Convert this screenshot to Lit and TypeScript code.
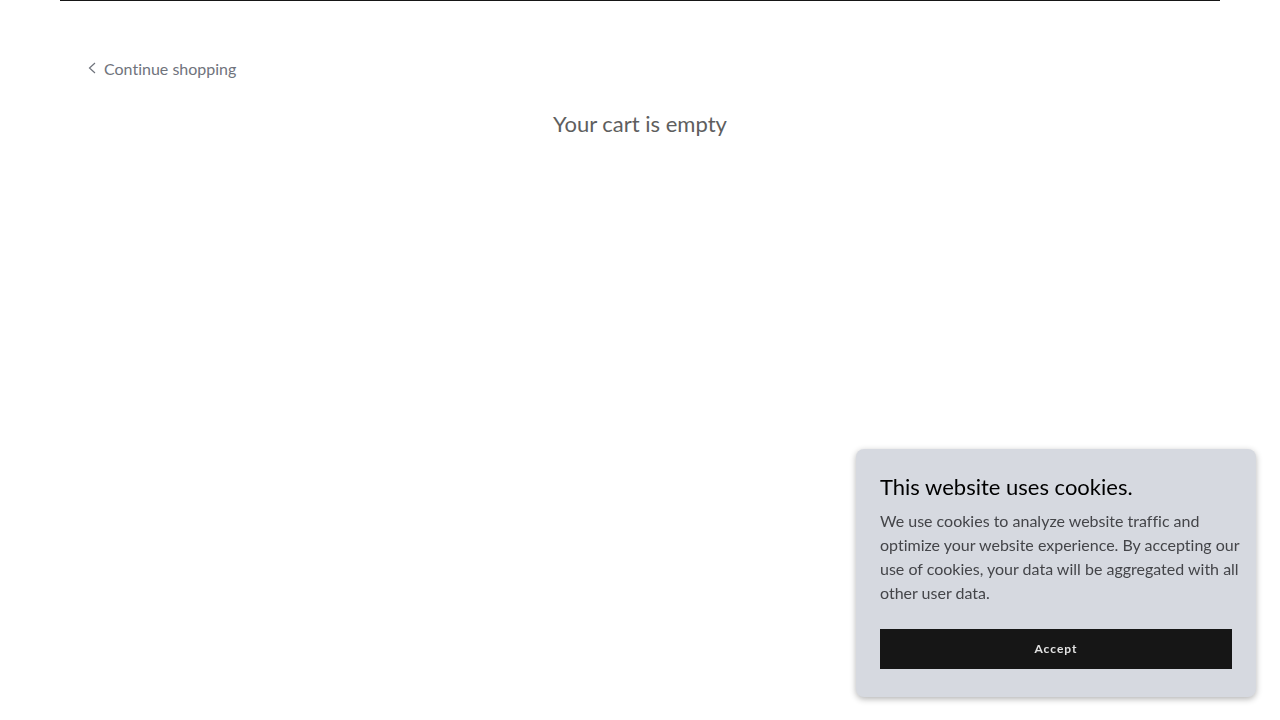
import { LitElement, html, css } from 'lit'
import { customElement, state } from 'lit/decorators.js'

@customElement('cookie-banner')
class CookieBanner extends LitElement {
  static styles = css`
    /* floats over the page, bottom right */
    :host {
      position: fixed;
      right: 24px;
      bottom: 23px;
      box-sizing: border-box;
      width: 400px;
      max-width: calc(100% - 48px);
      padding: 24px 24px 28px;
      border-radius: 8px;
      background-color: #d6d9e0;
      box-shadow: 0 2px 6px rgba(0, 0, 0, 0.3);
    }

    :host([hidden]) {
      display: none;
    }

    h2 {
      margin: 0 0 8px;
      color: #000;
      font-size: 22px;
      font-weight: 400;
      line-height: 28px;
    }

    /* the text may run a little into the right padding */
    p {
      margin: 0 -16px 24px 0;
      color: #444549;
      font-size: 16px;
      line-height: 24px;
    }

    button {
      display: block;
      width: 100%;
      height: 40px;
      padding: 0 24px 2px;
      border: none;
      border-radius: 0;
      background-color: #161616;
      color: #e2e2e2;
      font-family: inherit;
      font-size: 12px;
      font-weight: 700;
      letter-spacing: 1px;
      cursor: pointer;
    }

    button:hover {
      background-color: #333;
    }
  `

  #handleAccept () {
    this.dispatchEvent(new CustomEvent('accept', { bubbles: true, composed: true }))
  }

  render () {
    return html`
      <h2>This website uses cookies.</h2>
      <p>We use cookies to analyze website traffic and optimize your website experience. By accepting our use of cookies, your data will be aggregated with all other user data.</p>
      <button type="button" @click="${this.#handleAccept}">Accept</button>
    `
  }
}

@customElement('app-root')
class AppRoot extends LitElement {
  static styles = css`
    :host {
      display: block;
      min-height: 100vh;
      background-color: #fff;
      font-family: Lato, "Liberation Sans", sans-serif;
      font-variant-ligatures: no-common-ligatures;
    }

    main {
      margin: 0 60px;
      padding: 56px 24px;
      border-top: 1px solid #161616;
    }

    .back {
      display: inline-flex;
      align-items: center;
      gap: 4px;
      color: #6f737c;
      font-size: 16px;
      line-height: 24px;
      text-decoration: none;
    }

    .back:hover {
      text-decoration: underline;
    }

    .back svg {
      width: 16px;
      height: 16px;
      margin-bottom: 2px;
    }

    h1 {
      margin: 28px 0 0;
      color: #5e5e5e;
      font-size: 22px;
      font-weight: 400;
      line-height: 30px;
      text-align: center;
    }
  `

  @state()
  accepted = false

  #handleAccept () {
    this.accepted = true
  }

  render () {
    return html`
      <main>
        <a class="back" href="#">
          <svg viewBox="0 0 16 16" fill="none" stroke="currentColor" stroke-width="1.2" aria-hidden="true">
            <path d="M11 3 L5.5 8 L11 13" />
          </svg>
          Continue shopping
        </a>
        <h1>Your cart is empty</h1>
      </main>
      <cookie-banner ?hidden="${this.accepted}" @accept="${this.#handleAccept}"></cookie-banner>
    `
  }
}
